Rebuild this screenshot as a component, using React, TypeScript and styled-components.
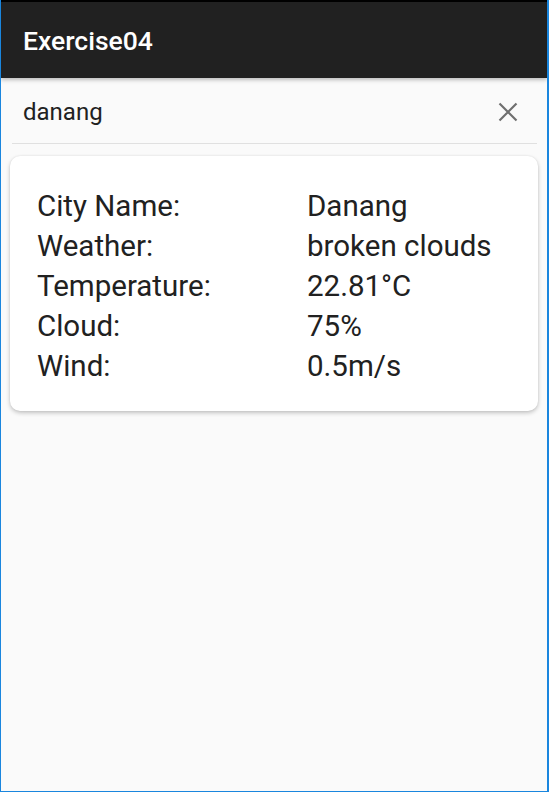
import React from 'react';
import styled, { createGlobalStyle } from 'styled-components';

const GlobalStyle = createGlobalStyle`
  html, body {
    margin: 0;
    padding: 0;
    background: #fafafa;
  }
  body {
    font-family: Roboto, 'Noto Sans', Arial, sans-serif;
  }
`;

const rows: [string, string][] = [
  ['City Name:', 'Danang'],
  ['Weather:', 'broken clouds'],
  ['Temperature:', '22.81°C'],
  ['Cloud:', '75%'],
  ['Wind:', '0.5m/s'],
];

function CloseIcon() {
  return (
    <svg width="20" height="20" viewBox="0 0 20 20" aria-hidden>
      <path d="M1.5 1.5 L18.5 18.5 M18.5 1.5 L1.5 18.5" stroke="#6f6f6f" strokeWidth="2.2" fill="none" />
    </svg>
  );
}

export default function App() {
  return (
    <>
      <GlobalStyle />
      <Frame>
        <AppBar>
          <Title>Exercise04</Title>
        </AppBar>
        <SearchRow>
          <SearchText>danang</SearchText>
          <ClearButton aria-label="clear">
            <CloseIcon />
          </ClearButton>
        </SearchRow>
        <Divider />
        <Card>
          <InfoGrid>
            {rows.map(([label, value]) => (
              <React.Fragment key={label}>
                <Cell>{label}</Cell>
                <Cell>{value}</Cell>
              </React.Fragment>
            ))}
          </InfoGrid>
        </Card>
      </Frame>
    </>
  );
}

const Frame = styled.div`
  box-sizing: border-box;
  width: 549px;
  height: 792px;
  border-left: 1px solid #1a86de;
  border-right: 2px solid #1a86de;
  border-bottom: 1px solid #1a86de;
  background: #fafafa;
  display: flex;
  flex-direction: column;
  overflow: hidden;
`;

const AppBar = styled.header`
  box-sizing: border-box;
  height: 78px;
  border-top: 2px solid #000;
  background: #212121;
  display: flex;
  align-items: center;
  padding: 1px 22px 0;
  box-shadow: 0 2px 4px rgba(0, 0, 0, 0.25);
  position: relative;
  z-index: 1;
`;

const Title = styled.h1`
  margin: 0;
  color: #fff;
  font-size: 26.5px;
  font-weight: 500;
`;

const SearchRow = styled.div`
  box-sizing: border-box;
  height: 65px;
  display: flex;
  align-items: center;
  justify-content: space-between;
  padding: 3px 29px 0 22px;
`;

const SearchText = styled.span`
  font-size: 24px;
  color: #212121;
`;

const ClearButton = styled.button`
  border: 0;
  background: none;
  padding: 0;
  display: flex;
  align-items: center;
  justify-content: center;
  width: 20px;
  height: 20px;
`;

const Divider = styled.hr`
  margin: 0 10px 0 11px;
  border: 0;
  border-top: 1px solid #e0e0e0;
`;

const Card = styled.section`
  margin: 12px 9px 0;
  background: #fff;
  border-radius: 10px;
  box-shadow: 0 2px 4px rgba(0, 0, 0, 0.22), 0 0 2px rgba(0, 0, 0, 0.08);
  padding: 30px 27px 25px;
`;

const InfoGrid = styled.div`
  display: grid;
  grid-template-columns: 270px 1fr;
`;

const Cell = styled.div`
  font-size: 29.5px;
  line-height: 40px;
  color: #212121;
`;
